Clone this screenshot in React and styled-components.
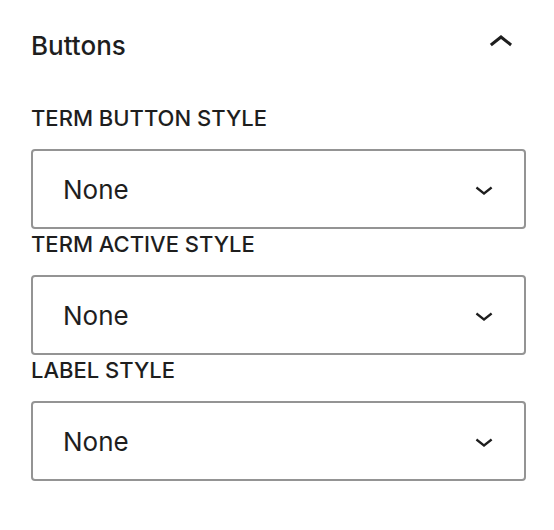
import React from 'react'
import styled, { createGlobalStyle } from 'styled-components'

const GlobalStyle = createGlobalStyle`
  html, body {
    margin: 0;
    padding: 0;
    background: #fff;
  }
  body {
    font-family: Inter, "Liberation Sans", sans-serif;
    color: #1e1e1e;
  }
`

const Panel = styled.div`
  width: 554px;
  height: 530px;
  box-sizing: border-box;
  padding: 0 28px 0 31px;
  background: #fff;
`

const Header = styled.div`
  height: 90px;
  display: flex;
  align-items: center;
  justify-content: space-between;
`

const Title = styled.h2`
  margin: 0;
  font-size: 26px;
  font-weight: 500;
  color: #1e1e1e;
`

const ToggleIcon = styled.svg`
  width: 48px;
  height: 48px;
  margin-top: -4px;
  margin-right: 1px;
  fill: #1e1e1e;
`

const Body = styled.div`
  margin-top: 13px;
  display: flex;
  flex-direction: column;
  gap: 0;
`

const Field = styled.div`
  display: flex;
  flex-direction: column;
`

const Label = styled.label`
  font-size: 22px;
  font-weight: 500;
  line-height: 30px;
  text-transform: uppercase;
  margin-bottom: 16px;
  color: #1e1e1e;
`

const SelectBox = styled.div`
  height: 80px;
  box-sizing: border-box;
  border: 2px solid #949494;
  border-radius: 4px;
  display: flex;
  align-items: center;
  justify-content: space-between;
  padding: 0 22px 0 30px;
  font-size: 26px;
  color: #1e1e1e;
`

const Caret = styled.svg`
  width: 36px;
  height: 36px;
  fill: #1e1e1e;
`

const fields = ['Term Button Style', 'Term Active Style', 'Label Style']

export default function App() {
  return (
    <>
      <GlobalStyle />
      <Panel>
        <Header>
          <Title>Buttons</Title>
          <ToggleIcon viewBox="0 0 24 24">
            <path d="M6.5 12.4L12 8l5.5 4.4-.9 1.2L12 10l-4.6 3.6-1-1.2z" />
          </ToggleIcon>
        </Header>
        <Body>
          {fields.map((name) => (
            <Field key={name}>
              <Label>{name}</Label>
              <SelectBox>
                <span>None</span>
                <Caret viewBox="0 0 24 24">
                  <path d="M17.5 11.6L12 16l-5.5-4.4.9-1.2L12 14l4.6-3.6 1 1.2z" />
                </Caret>
              </SelectBox>
            </Field>
          ))}
        </Body>
      </Panel>
    </>
  )
}
